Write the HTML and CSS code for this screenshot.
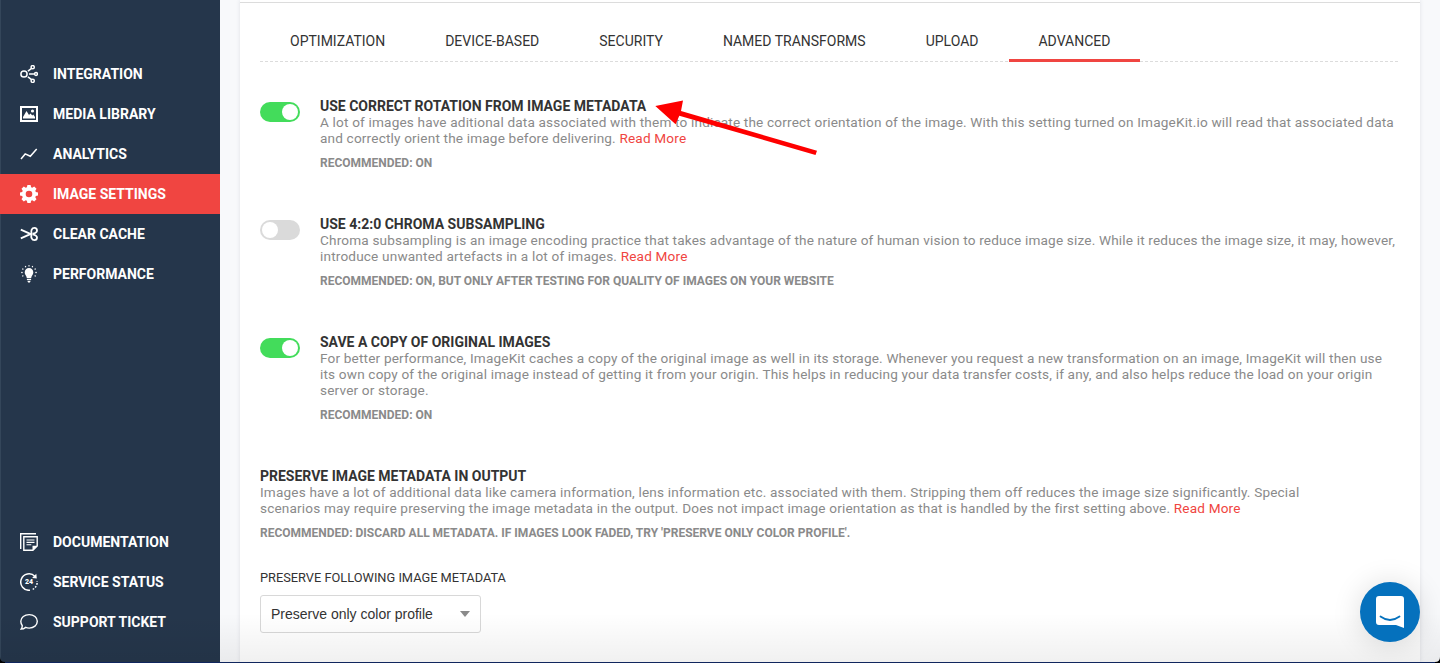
FILE: index.html
```html
<!DOCTYPE html>
<html lang="en">
<head>
<meta charset="utf-8">
<title>Image Settings</title>
<link rel="stylesheet" href="styles.css">
</head>
<body>
<div class="app">
  <nav class="sidebar">
    <div class="menu">
      <a class="item"><svg class="icon" viewBox="0 0 18 18" fill="none" stroke="#fff" stroke-width="1.5"><circle cx="4" cy="9" r="3.1"/><circle cx="12.7" cy="2.2" r="1.6"/><circle cx="16" cy="9" r="1.4"/><circle cx="12.7" cy="15.8" r="1.6"/><path d="M7.9 6.1l3.7-2.8M9 9h5.5M7.9 11.9l3.7 2.8"/></svg><span>INTEGRATION</span></a>
      <a class="item"><svg class="icon" viewBox="0 0 18 18"><path d="M1 2h16v14H1z" fill="none" stroke="#fff" stroke-width="2"/><path d="M3 13.5V12l3.5-6L9 10l1.5-1.6 1.8 2 1-.8L15 12v1.5z" fill="#fff"/><circle cx="12.5" cy="6" r="1.6" fill="#fff"/></svg><span>MEDIA LIBRARY</span></a>
      <a class="item"><svg class="icon" viewBox="0 0 18 18" fill="none" stroke="#fff" stroke-width="1.5"><path d="M1 14l4.2-5.1 5.1 2.4L16.7 4"/></svg><span>ANALYTICS</span></a>
      <a class="item active"><svg class="icon" viewBox="0 0 18 18"><path fill="#fff" fill-rule="evenodd" d="M7.4 0h3.2l.5 2.2 1.2.5L14.2 1.5 16.5 3.8 15.3 5.7l.5 1.2 2.2.5v3.2l-2.2.5-.5 1.2 1.2 1.9-2.3 2.3-1.9-1.200-1.200.5-.5 2.200H7.400l-.5-2.200-1.200-.5-1.900 1.200-2.300-2.300 1.200-1.900-.5-1.200L0 10.600V7.400l2.200-.5.5-1.200L1.500 3.800l2.300-2.300 1.900 1.200 1.200-.5zM9 5.700a3.300 3.300 0 1 0 0 6.600 3.300 3.300 0 0 0 0-6.600z"/></svg><span>IMAGE SETTINGS</span></a>
      <a class="item"><svg class="icon" viewBox="0 0 18 18" fill="none" stroke="#fff" stroke-width="1.800"><path d="M.8 4.600L12 9.600M.8 13.400L12 8.400"/><path d="M11.500 8.800c-.8-3.200.3-6 2.900-6 1.600 0 2.600 1.100 2.600 2.600 0 2.400-2.400 2.900-4.400 3.400M11.500 9.200c-.8 3.200.3 6 2.900 6 1.600 0 2.600-1.100 2.600-2.600 0-2.400-2.400-2.900-4.400-3.400"/></svg><span>CLEAR CACHE</span></a>
      <a class="item"><svg class="icon" viewBox="0 0 18 18"><path fill="#fff" d="M9 3a4.300 4.300 0 0 0-4.300 4.400c0 2.400 1.900 3.300 2.100 5.600h4.400c.2-2.300 2.100-3.200 2.100-5.600A4.300 4.300 0 0 0 9 3zM6.900 13.800h4.200v1.200H6.900zM7.300 15.700h3.400l-.8 1.900H8.100z"/><path fill="none" stroke="#fff" stroke-width="1.300" stroke-linecap="round" d="M9 .7v.2M5.500 1.500l.1.200M12.500 1.500l-.1.200M2.700 4l.2.100M15.300 4l-.2.100M1.800 7.500h.3M16.200 7.500h-.3M2.700 11l.2-.1M15.300 11l-.2-.1"/></svg><span>PERFORMANCE</span></a>
    </div>
    <div class="menu">
      <a class="item"><svg class="icon" viewBox="0 0 18 18" fill="none" stroke="#fff" stroke-width="1.400"><path d="M.7 16V.7H16"/><path d="M3.800 3.800h13.400v9.100l-4.300 4.400H3.800z"/><path d="M12.500 17.500v-4.800h5z" fill="#fff" stroke="none"/><path d="M6.500 7h8M6.500 9.400h8M6.500 11.800h4.800" stroke-width="1.100"/></svg><span>DOCUMENTATION</span></a>
      <a class="item"><svg class="icon" viewBox="0 0 18 18"><path d="M15 3.500A8.200 8.200 0 1 0 10 17.200" fill="none" stroke="#fff" stroke-width="1.500"/><path d="M16.300.8l.5 4.700-4.700-.4z" fill="#fff"/><path d="M12.700 16.400A8.200 8.200 0 0 0 17.100 8" fill="none" stroke="#fff" stroke-width="1.500" stroke-dasharray="1.700 1.400"/><text class="hours" x="9" y="11.400">24</text></svg><span>SERVICE STATUS</span></a>
      <a class="item"><svg class="icon" viewBox="0 0 18 18" fill="none" stroke="#fff" stroke-width="1.400"><path d="M9.200 1.600c4.600 0 8.100 2.900 8.100 6.700s-3.500 6.800-8.100 6.800c-1.300 0-2.500-.2-3.500-.7-1.100.9-2.600 1.700-4.600 1.700.9-1.100 1.200-2.200 1.200-3.400C1.300 11.500.8 10 .8 8.300c0-3.800 3.800-6.700 8.400-6.700z"/></svg><span>SUPPORT TICKET</span></a>
    </div>
  </nav>
  <main class="main">
    <section class="card">
      <div class="tabs">
        <a class="tab">OPTIMIZATION</a><a class="tab">DEVICE-BASED</a><a class="tab">SECURITY</a><a class="tab">NAMED TRANSFORMS</a><a class="tab">UPLOAD</a><a class="tab selected">ADVANCED</a>
      </div>
      <div class="setting">
        <span class="toggle on"></span>
        <div>
          <h3 class="title">USE CORRECT ROTATION FROM IMAGE METADATA</h3>
          <p class="desc">A lot of images have aditional data associated with them to indicate the correct orientation of the image. With this setting turned on ImageKit.io will read that associated data<br>and correctly orient the image before delivering. <a class="more">Read More</a></p>
          <p class="hint">RECOMMENDED: ON</p>
        </div>
      </div>
      <div class="setting">
        <span class="toggle"></span>
        <div>
          <h3 class="title">USE 4:2:0 CHROMA SUBSAMPLING</h3>
          <p class="desc">Chroma subsampling is an image encoding practice that takes advantage of the nature of human vision to reduce image size. While it reduces the image size, it may, however,<br>introduce unwanted artefacts in a lot of images. <a class="more">Read More</a></p>
          <p class="hint">RECOMMENDED: ON, BUT ONLY AFTER TESTING FOR QUALITY OF IMAGES ON YOUR WEBSITE</p>
        </div>
      </div>
      <div class="setting">
        <span class="toggle on"></span>
        <div>
          <h3 class="title">SAVE A COPY OF ORIGINAL IMAGES</h3>
          <p class="desc">For better performance, ImageKit caches a copy of the original image as well in its storage. Whenever you request a new transformation on an image, ImageKit will then use<br>its own copy of the original image instead of getting it from your origin. This helps in reducing your data transfer costs, if any, and also helps reduce the load on your origin<br>server or storage.</p>
          <p class="hint">RECOMMENDED: ON</p>
        </div>
      </div>
      <div class="metadata">
        <h3 class="title">PRESERVE IMAGE METADATA IN OUTPUT</h3>
        <p class="desc">Images have a lot of additional data like camera information, lens information etc. associated with them. Stripping them off reduces the image size significantly. Special<br>scenarios may require preserving the image metadata in the output. Does not impact image orientation as that is handled by the first setting above. <a class="more">Read More</a></p>
        <p class="hint">RECOMMENDED: DISCARD ALL METADATA. IF IMAGES LOOK FADED, TRY 'PRESERVE ONLY COLOR PROFILE'.</p>
        <div class="label">PRESERVE FOLLOWING IMAGE METADATA</div>
        <div class="select"><span>Preserve only color profile</span><span class="caret"></span></div>
      </div>
    </section>
  </main>
  <svg class="arrow" viewBox="0 0 170 60"><path fill="#fe0000" d="M5.300 6L33 .4 31 11l136 39.700-1.500 4.200L29.300 15.700l-3.700 8.600z"/></svg>
  <div class="fade"></div>
  <div class="chat"><svg viewBox="0 0 60 60"><path fill="#fff" d="M19 14h22a3 3 0 0 1 3 3v29l-8-3H19a3 3 0 0 1-3-3V17a3 3 0 0 1 3-3z"/><path d="M20.500 34.500q9.500 7 19 0" fill="none" stroke="#0571bd" stroke-width="1.800" stroke-linecap="round"/></svg></div>
  <svg class="frame" viewBox="0 0 1440 10"><path d="M0 4q0 5 5 5h1430q5 0 5-5v6H0z" fill="#000"/><path d="M5 9h1430v1H5z" fill="#10265e"/></svg>
</div>
</body>
</html>
```
FILE: styles.css
```css
* { box-sizing: border-box; }
body { margin: 0; font-family: Roboto, "Liberation Sans", sans-serif; color: #333; }
.app { position: relative; display: flex; width: 1440px; height: 663px; overflow: hidden; background: #f8f9fb; }
.sidebar { width: 220px; flex: none; display: flex; flex-direction: column; justify-content: space-between; padding: 54px 0 21px; background: #25364b; box-shadow: inset 1px 0 #34465a; }
.item { display: flex; align-items: center; gap: 15px; height: 40px; padding-left: 20px; color: #fff; font-size: 14px; font-weight: 700; }
.item.active { background: #f04541; }
.icon { width: 18px; height: 18px; flex: none; }
.hours { fill: #fff; font: 900 7px Roboto, sans-serif; text-anchor: middle; }
.main { flex: 1; min-width: 0; padding: 0 20px; }
.card { height: 663px; background: #fff; padding: 2px 20px 0; box-shadow: 0 0 4px rgba(40, 50, 70, .12); }
.card::before { content: ""; display: block; height: 1px; margin: 0 -20px; background: #dcdcdc; }
.tabs { display: flex; height: 59px; margin-bottom: 36px; background: repeating-linear-gradient(90deg, #dcdcdc 0 3px, transparent 3px 5px) 0 100% / 100% 1px no-repeat; }
.tab { height: 59px; padding: 0 30px; font-size: 14px; line-height: 77px; white-space: nowrap; }
.tab.selected { margin-left: 1px; padding-left: 29px; border-bottom: 3px solid #f04541; }
.setting { display: flex; gap: 20px; margin-bottom: 45px; }
.title { margin: 0; font-size: 14px; line-height: 16px; font-weight: 700; }
.desc { margin: 0; font-size: 13.6px; line-height: 16px; letter-spacing: .17px; color: #8a8a8a; white-space: nowrap; }
.more { color: #f04541; }
.hint { margin: 9px 0 0; font-size: 12px; line-height: 16px; font-weight: 700; color: #8a8a8a; white-space: nowrap; }
.toggle { width: 40px; height: 20px; flex: none; display: flex; margin-top: 4px; padding: 2px; border-radius: 10px; background: #dadada; }
.toggle::before { content: ""; width: 16px; height: 16px; border-radius: 50%; background: #fff; }
.toggle.on { justify-content: flex-end; background: #43dc5b; }
.label { margin-top: 28px; font-size: 12.8px; line-height: 18px; }
.select { display: flex; align-items: center; justify-content: space-between; width: 221px; height: 38px; margin-top: 8px; padding: 0 10px; border: 1px solid #d8d8d8; border-radius: 3px; background: #fff; font: 14px "Liberation Sans", sans-serif; }
.caret { border: 5px solid transparent; border-top: 6px solid #8a8a8a; border-bottom: 0; }
.arrow { position: absolute; left: 650px; top: 100px; width: 170px; height: 60px; }
.fade { position: absolute; left: 0; bottom: 0; width: 1440px; height: 50px; background: linear-gradient(transparent, rgba(0, 0, 0, .06)); }
.chat { position: absolute; left: 1360px; top: 582px; width: 60px; height: 60px; border-radius: 50%; background: #0571bd; box-shadow: 0 2px 30px rgba(0, 0, 0, .14); }
.frame { position: absolute; left: 0; bottom: 0; width: 1440px; height: 10px; }
```
